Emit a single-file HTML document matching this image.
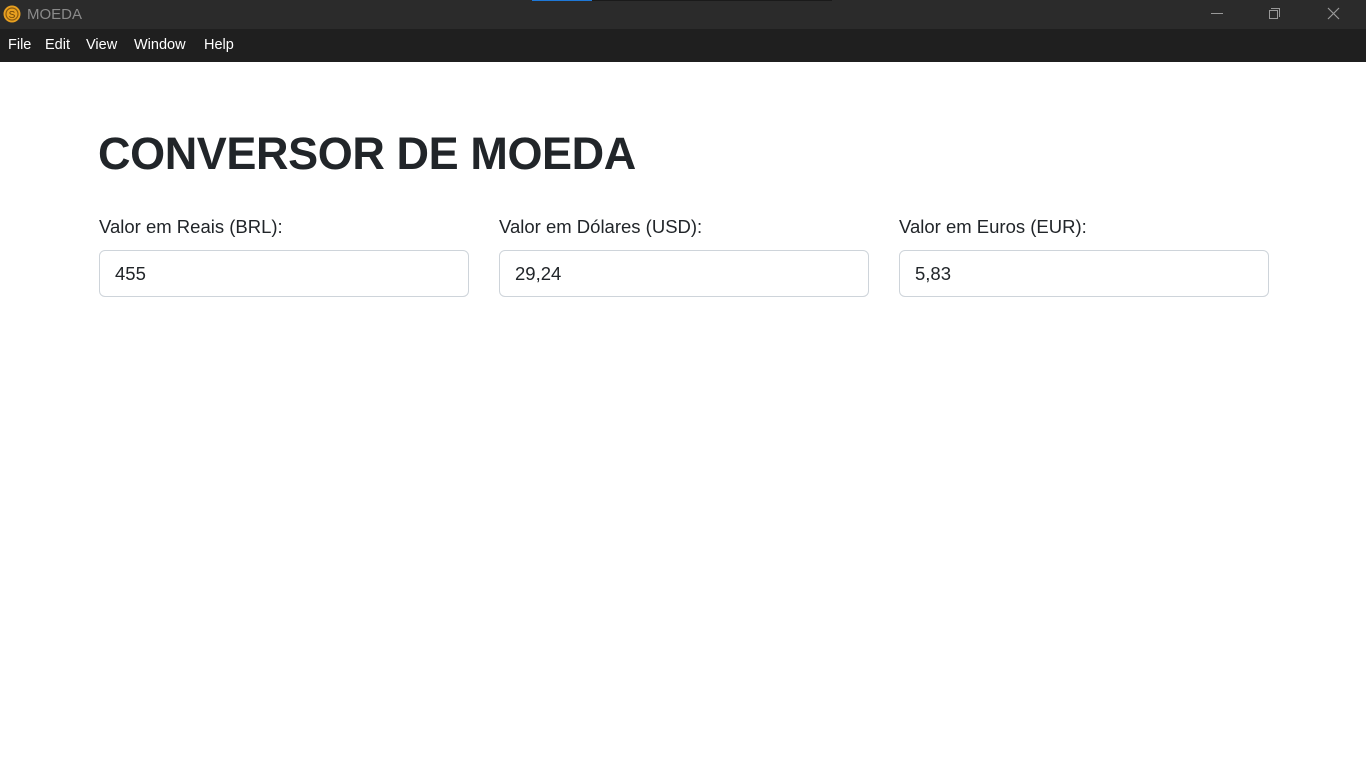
<!DOCTYPE html>
<html><head><meta charset="utf-8"><style>
*{margin:0;padding:0;box-sizing:border-box}
body{width:1366px;height:765px;background:#fff;font-family:"Liberation Sans",sans-serif;position:relative;overflow:hidden}
.tb{position:absolute;left:0;top:0;width:1366px;height:29px;background:#2b2b2b}
.mb{position:absolute;left:0;top:29px;width:1366px;height:33px;background:#1f1f1f}
.mb span{position:absolute;top:8px;color:#fff;font-size:14.5px}
h1{position:absolute;left:98px;top:128px;font-size:45px;font-weight:bold;color:#212529;letter-spacing:-0.4px}
.lbl{position:absolute;top:216px;font-size:18.5px;color:#212529}
.in{position:absolute;top:250px;width:370px;height:47px;border:1px solid #ced4da;border-radius:6px;padding:12px 15px;font-size:18.5px;color:#212529}
</style></head><body>
<div class="tb">
<svg style="position:absolute;left:3px;top:5px" width="18" height="18" viewBox="0 0 18 18"><circle cx="9" cy="9" r="8.5" fill="#e8a020"/><circle cx="9" cy="9" r="6" fill="none" stroke="#8a5a10" stroke-width="1.2"/><text x="9" y="13" font-size="10" text-anchor="middle" fill="#6a4208" font-family="Liberation Sans">S</text></svg>
<span style="position:absolute;left:27px;top:6px;color:#8a8a8a;font-size:15px">MOEDA</span>
<div style="position:absolute;left:532px;top:0;width:60px;height:1px;background:#1e78d8"></div>
<div style="position:absolute;left:592px;top:0;width:240px;height:1px;background:#1a1a1a"></div>
<div style="position:absolute;left:1211px;top:13px;width:12px;height:1px;background:#999"></div>
<div style="position:absolute;left:1269px;top:10px;width:9px;height:9px;border:1px solid #999"></div>
<div style="position:absolute;left:1271px;top:8px;width:9px;height:9px;border-top:1px solid #999;border-right:1px solid #999"></div>
<svg style="position:absolute;left:1327px;top:7px" width="13" height="13"><path d="M1 1L12 12M12 1L1 12" stroke="#999" stroke-width="1.2"/></svg>
</div>
<div class="mb"><span style="left:8px">File</span><span style="left:45px">Edit</span><span style="left:86px">View</span><span style="left:134px">Window</span><span style="left:204px">Help</span></div>
<h1>CONVERSOR DE MOEDA</h1>
<div class="lbl" style="left:99px">Valor em Reais (BRL):</div>
<div class="lbl" style="left:499px">Valor em Dólares (USD):</div>
<div class="lbl" style="left:899px">Valor em Euros (EUR):</div>
<div class="in" style="left:99px">455</div>
<div class="in" style="left:499px">29,24</div>
<div class="in" style="left:899px">5,83</div>
</body></html>
